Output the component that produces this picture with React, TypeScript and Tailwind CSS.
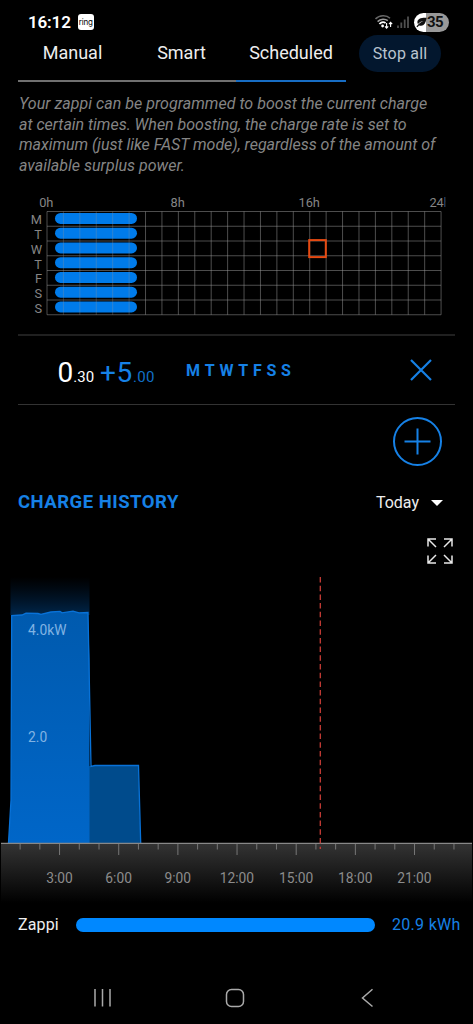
const DAYS = ["M", "T", "W", "T", "F", "S", "S"];

const INTRO = [
  { text: "Your zappi can be programmed to boost the current charge", tracking: "tracking-[0.03px]" },
  { text: "at certain times. When boosting, the charge rate is set to", tracking: "tracking-[-0.02px]" },
  { text: "maximum (just like FAST mode), regardless of the amount of", tracking: "tracking-[-0.03px]" },
  { text: "available surplus power.", tracking: "tracking-[0.02px]" },
];

const HOUR_W = 19.72;

function StatusBar() {
  return (
    <div className="flex h-[35px] items-center justify-between pt-[9px] pr-6 pl-[28px]">
      <div className="flex items-center gap-[7px]">
        <span className="text-[17px] leading-none font-semibold tracking-[-0.15px] text-white">16:12</span>
        <span className="flex h-4 w-4 items-center justify-center rounded-[3px] bg-white pb-px font-['Inter',sans-serif] text-[8px] leading-none tracking-[-0.2px] text-black">
          ring
        </span>
      </div>
      <div className="flex items-center">
        <svg width="36" height="16" viewBox="1 0 36 16" fill="none">
          <path d="M1.5 5C5.5 0.8 12.5 0.8 16 4.2" stroke="#666" strokeWidth="1.6" />
          <path d="M3.6 7.6C6.5 4.6 11.2 4.6 13.8 6.6" stroke="#999" strokeWidth="1.6" />
          <path d="M5.4 10C7.4 7.8 9.8 7.8 11.6 9" stroke="#fff" strokeWidth="1.8" />
          <circle cx="8.6" cy="12" r="1.4" fill="#fff" />
          <path d="M12.6 9v5M11 12.3l1.6 1.8 1.6-1.8M16.6 13V8.4M15 10.2l1.6-1.8 1.6 1.8" stroke="#fff" strokeWidth="1.1" />
          <path d="M24 14v-2.5M27.3 14V8.5M30.7 14V5.5M34 14V2.5" stroke="#505050" strokeWidth="1.8" />
        </svg>
        <div className="ml-[3px] flex h-[19px] w-[35px] items-center rounded-full bg-linear-to-r from-white from-35% to-[#999] to-35%">
          <svg className="ml-[2px]" width="11" height="11" viewBox="0 0 11 11">
            <path d="M10.6 0.8C6 0.4 1.2 1.6 1.4 5.2c0 .8.2 1.3.6 1.8C3.8 4.9 5.6 4.2 7.6 4 5 5 2.8 6.6 0.4 9.6l1 .6L3 8.4c4.4 1.4 6.6-1.4 7.6-7.6Z" fill="#111" />
          </svg>
          <span className="text-[15px] leading-none font-bold tracking-[-0.6px] text-[#111]">35</span>
        </div>
      </div>
    </div>
  );
}

function Tabs() {
  return (
    <div className="flex h-[47px] pl-[18px]">
      <div className="flex w-[109px] justify-center border-b-2 border-[#707070] pt-[6px] text-[18px] leading-6">Manual</div>
      <div className="flex w-[109px] justify-center border-b-2 border-[#707070] pt-[6px] text-[18px] leading-6">Smart</div>
      <div className="flex w-[110px] justify-center border-b-2 border-[#176dc4] pt-[6px] text-[18px] leading-6">Scheduled</div>
      <button className="ml-[13px] h-[37px] w-[82px] rounded-full bg-[#03172e] text-base tracking-[0.2px] text-[#b9c3cf]">Stop all</button>
    </div>
  );
}

function ScheduleGrid() {
  const left = 47;
  const top = 22;
  const col = 16.42;
  const row = 14.75;
  return (
    <svg className="block" width="473" height="145" viewBox="0 190 473 145">
      <g transform="translate(0 189.5)">
        {DAYS.map((_, i) => (
          <rect key={i} x="55" y={top + 1.4 + i * row} width="82" height="11" rx="5.5" fill="#007bea" />
        ))}
        <g stroke="#999" strokeWidth="1">
          {Array.from({ length: 25 }, (_, i) => (
            <path key={i} d={`M${left + i * col} ${top}v${row * 7}`} strokeOpacity={i > 0 && i < 6 ? 0.3 : 0.5} />
          ))}
          {Array.from({ length: 8 }, (_, i) => (
            <path key={i} d={`M${left} ${top + i * row}h${col * 24}`} strokeOpacity="0.5" />
          ))}
        </g>
        <rect x="309.2" y="50.6" width="16.6" height="17" fill="none" stroke="#e64a12" strokeWidth="2" />
      </g>
      <g fill="#858585" fontSize="12.8">
        {DAYS.map((d, i) => (
          <text key={i} x="42" y={224.3 + i * row} textAnchor="end">{d}</text>
        ))}
        <text x="46.3" y="206.8" textAnchor="middle">0h</text>
        <text x="177.7" y="206.8" textAnchor="middle">8h</text>
        <text x="309.2" y="206.8" textAnchor="middle">16h</text>
        {/* last label runs past the chart edge */}
        <svg x="420" y="190" width="25.3" height="20">
          <text x="9.4" y="16.8">24h</text>
        </svg>
      </g>
    </svg>
  );
}

function BoostRow() {
  return (
    <div className="mx-[18px] flex h-[71px] items-center border-t-2 border-b border-t-[#202020] border-b-[#333]">
      <div className="ml-[39.5px] flex h-9 w-[128.5px] items-baseline pt-[3px] leading-9">
        <span className="text-[28px] text-white">0</span>
        <span className="text-[15px] text-white">.30</span>
        <span className="ml-[6px] text-[28px] tracking-[0.6px] text-[#1681e6]">+5</span>
        <span className="text-[15px] tracking-[0.3px] text-[#1270c8]">.00</span>
      </div>
      <div className="flex w-[105px] justify-between pt-0.5 text-base leading-none font-bold text-[#1681e6]">
        {DAYS.map((d, i) => (
          <span key={i}>{d}</span>
        ))}
      </div>
      <svg className="mr-[23px] ml-auto" width="22" height="22" viewBox="0 0 22 22">
        <path d="M1 1l20 20M21 1L1 21" stroke="#1681e6" strokeWidth="2.2" />
      </svg>
    </div>
  );
}

function HistoryChart() {
  return (
    <svg className="block" width="473" height="338" viewBox="0 567 473 338">
      <defs>
        <linearGradient id="glow" x1="0" y1="0" x2="0" y2="1">
          <stop offset="0" stopColor="#001a36" stopOpacity="0" />
          <stop offset="1" stopColor="#00264a" />
        </linearGradient>
        <linearGradient id="charge" x1="0" y1="0" x2="0" y2="1">
          <stop offset="0" stopColor="#005aae" />
          <stop offset="1" stopColor="#0066c8" />
        </linearGradient>
        <linearGradient id="axis" x1="0" y1="0" x2="0" y2="1">
          <stop offset="0" stopColor="#343434" />
          <stop offset="1" stopColor="#000" />
        </linearGradient>
      </defs>
      <rect x="10.5" y="577" width="79" height="38" fill="url(#glow)" />
      <path d="M89 766h49.5l2 77H89Z" fill="#004b8c" />
      <path d="M8.5 843 11 800 11.7 615.5 22 615 26 613.2 38 613.5 41 614.3 51 612 60 611.3 62 612.8 73 611.2 79 612.8 88 612.5 89.5 660V843Z" fill="url(#charge)" />
      <path
        d="M8.5 843 11 800 11.7 615.5 22 615 26 613.2 38 613.5 41 614.3 51 612 60 611.3 62 612.8 73 611.2 79 612.8 88 612.5 91 766.5 95 765.5H138.5L140.7 843"
        fill="none"
        stroke="#0872d8"
        strokeWidth="1.3"
      />
      <g fill="#80b3e3" fontSize="13.8">
        <text x="28" y="635.3">4.0kW</text>
        <text x="28" y="742.3">2.0</text>
      </g>
      <rect x="1" y="843" width="471" height="60" fill="url(#axis)" />
      <path d="M1 843.3h471" stroke="#888" strokeWidth="1.2" />
      <g stroke="#777" strokeWidth="1">
        {Array.from({ length: 23 }, (_, i) => (
          <path key={i} d={`M${0.4 + (i + 1) * HOUR_W} 844v${(i + 1) % 3 === 0 ? 11 : 5.5}`} />
        ))}
      </g>
      <g fill="#8c8c8c" fontSize="13.8" textAnchor="middle">
        {[3, 6, 9, 12, 15, 18, 21].map((h) => (
          <text key={h} x={0.3 + h * HOUR_W} y="882.5">{h}:00</text>
        ))}
      </g>
      <path d="M320.3 577v272" stroke="#c83c36" strokeWidth="1.3" strokeDasharray="5.5 3.2" />
    </svg>
  );
}

export default function App() {
  return (
    <div className="h-[1024px] w-[473px] overflow-hidden bg-black font-['Roboto',sans-serif] text-[#eee]">
      <StatusBar />
      <Tabs />
      <div className="h-[108px] pt-3 pl-[19px] text-base leading-[20.5px] text-[#858585] italic">
        {INTRO.map((line) => (
          <p key={line.text} className={`whitespace-nowrap ${line.tracking}`}>{line.text}</p>
        ))}
      </div>
      <ScheduleGrid />
      <div className="-mt-px">
        <BoostRow />
      </div>
      <div className="flex h-[74px] justify-end pt-3 pr-[31px]">
        <svg width="49" height="49" viewBox="0 0 49 49" fill="none" stroke="#1681e6">
          <circle cx="24.5" cy="24.5" r="23.5" strokeWidth="2" />
          <path d="M24.5 11.5v26M11.5 24.5h26" strokeWidth="2" />
        </svg>
      </div>
      <div className="flex h-[47px] items-center pr-[30px] pl-[18px]">
        <h2 className="text-[18.5px] font-bold tracking-[0.5px] text-[#1681e6]">CHARGE HISTORY</h2>
        <span className="mr-3 ml-auto text-base text-[#eee]">Today</span>
        <svg width="12" height="6" viewBox="0 0 12 6">
          <path d="M0 0h12L6 6Z" fill="#fff" />
        </svg>
      </div>
      <div className="flex h-[41px] justify-end pt-[12px] pr-5">
        <svg width="26" height="26" viewBox="0 0 26 26" fill="none" stroke="#e8e8e8" strokeWidth="1.5">
          <path d="M1 8.5V1h8M1 1l8 8M17 1h8v7.5M25 1l-8 8M1 17.5V25h8M1 25l8-8M17 25h8v-7.5M25 25l-8-8" />
        </svg>
      </div>
      <HistoryChart />
      <div className="flex h-[40px] items-center pl-[18px] text-base">
        <span className="w-[58px] tracking-[0.15px]">Zappi</span>
        <div className="h-[14px] w-[299px] rounded-full bg-[#0088ff]" />
        <span className="ml-[17px] tracking-[0.3px] text-[#1681e6]">20.9 kWh</span>
      </div>
      <div className="flex pt-[43px] pl-[93px]">
        <svg width="282" height="20" viewBox="93 988 282 20" fill="none" stroke="#aaa" strokeWidth="1.5">
          <path d="M95 989v17.5M102.5 989v17.5M110 989v17.5" />
          <rect x="226.5" y="989.5" width="17" height="17" rx="5" />
          <path d="M372.5 989.3 362.5 998l10 8.5" />
        </svg>
      </div>
    </div>
  );
}
